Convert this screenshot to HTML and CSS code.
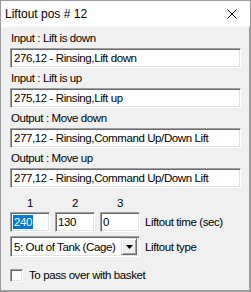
FILE: index.html
```html
<!DOCTYPE html>
<html lang="en">
<head>
  <meta charset="UTF-8">
  <title>Liftout pos # 12</title>
  <link rel="stylesheet" href="styles.css">
</head>
<body>
  <div class="window">
    <div class="titlebar">
      <span class="title">Liftout pos # 12</span>
      <svg class="close" width="10" height="10" viewBox="0 0 10 10">
        <path d="M0.5 0.5 L9.5 9.5 M9.5 0.5 L0.5 9.5" stroke="#000" stroke-width="1" fill="none"/>
      </svg>
    </div>
    <div class="client">
      <div class="field">
        <div class="label">Input : Lift is down</div>
        <div class="edit">276,12 - Rinsing,Lift down</div>
      </div>
      <div class="field">
        <div class="label">Input : Lift is up</div>
        <div class="edit">275,12 - Rinsing,Lift up</div>
      </div>
      <div class="field">
        <div class="label">Output : Move down</div>
        <div class="edit">277,12 - Rinsing,Command Up/Down Lift</div>
      </div>
      <div class="field">
        <div class="label">Output : Move up</div>
        <div class="edit">277,12 - Rinsing,Command Up/Down Lift</div>
      </div>

      <div class="times">
        <div class="col">
          <div class="num">1</div>
          <div class="edit small"><span class="sel">240</span></div>
        </div>
        <div class="col">
          <div class="num">2</div>
          <div class="edit small">130</div>
        </div>
        <div class="col">
          <div class="num">3</div>
          <div class="edit small">0</div>
        </div>
        <span class="side-label">Liftout time (sec)</span>
      </div>

      <div class="type-row">
        <div class="combo">
          <span class="combo-text">5: Out of Tank (Cage)</span>
          <span class="combo-btn">
            <svg width="7" height="4" viewBox="0 0 7 4"><path d="M0 0 H7 L3.5 4 Z" fill="#000"/></svg>
          </span>
        </div>
        <span class="side-label">Liftout type</span>
      </div>

      <label class="check">
        <span class="box"></span>
        <span>To pass over with basket</span>
      </label>
    </div>
  </div>
</body>
</html>
```

FILE: styles.css
```css
html, body {
  margin: 0;
  padding: 0;
  background: #fff;
}
.window {
  width: 251px;
  height: 292px;
  box-sizing: border-box;
  border: 1px solid #9a9a9a;
  display: flex;
  flex-direction: column;
  font-family: 'Liberation Sans', Arial, sans-serif;
  color: #000;
}
.titlebar {
  height: 25px;
  flex: none;
  background: #fff;
  display: flex;
  align-items: center;
  justify-content: space-between;
  padding: 0 13px 0 4px;
}
.title {
  font-size: 12px;
}
.close {
  display: block;
}
.client {
  flex: 1;
  background: #f0f0f0;
  border-top: 1px solid #f7f7f7;
  border-right: 1px solid #a0a0a0;
  border-bottom: 1px solid #a0a0a0;
  padding: 4px 8px 0 9px;
  font-size: 11.5px;
  letter-spacing: -0.4px;
  display: flex;
  flex-direction: column;
}
.field {
  display: flex;
  flex-direction: column;
  gap: 3px;
  margin-bottom: 3px;
}
.label {
  line-height: 14px;
  padding-left: 1px;
}
.edit {
  height: 20px;
  box-sizing: border-box;
  background: #fff;
  border: 1px solid;
  border-color: #a0a0a0 #fff #fff #a0a0a0;
  box-shadow: inset 1px 1px 0 #696969, inset -1px -1px 0 #e3e3e3;
  padding: 0 3px;
  line-height: 18px;
  white-space: nowrap;
  overflow: hidden;
}
.times {
  display: flex;
  align-items: flex-end;
  gap: 5px;
  margin-top: 5px;
}
.col {
  width: 40px;
  display: flex;
  flex-direction: column;
  gap: 2px;
}
.num {
  text-align: center;
  line-height: 14px;
}
.edit.small {
  padding: 0 2px;
}
.sel {
  background: #0078d7;
  color: #fff;
  display: inline-block;
  line-height: 14px;
  padding: 0 1px;
}
.side-label {
  line-height: 20px;
}
.type-row {
  display: flex;
  align-items: center;
  gap: 5px;
  margin-top: 4px;
}
.combo {
  width: 130px;
  height: 21px;
  box-sizing: border-box;
  background: #fff;
  border: 1px solid;
  border-color: #a0a0a0 #fff #fff #a0a0a0;
  box-shadow: inset 1px 1px 0 #696969, inset -1px -1px 0 #e3e3e3;
  padding: 2px 2px 2px 3px;
  display: flex;
  align-items: center;
  justify-content: space-between;
}
.combo-text {
  white-space: nowrap;
}
.combo-btn {
  width: 16px;
  height: 17px;
  box-sizing: border-box;
  background: #f0f0f0;
  border: 1px solid;
  border-color: #e3e3e3 #696969 #696969 #e3e3e3;
  box-shadow: inset 1px 1px 0 #fff, inset -1px -1px 0 #a0a0a0;
  display: flex;
  align-items: center;
  justify-content: center;
}
.combo-btn svg {
  display: block;
}
.check {
  display: flex;
  align-items: center;
  gap: 6px;
  margin-top: 11px;
  line-height: 14px;
}
.box {
  width: 13px;
  height: 13px;
  box-sizing: border-box;
  background: #fff;
  border: 1px solid;
  border-color: #a0a0a0 #fff #fff #a0a0a0;
  box-shadow: inset 1px 1px 0 #696969, inset -1px -1px 0 #e3e3e3;
}
```
